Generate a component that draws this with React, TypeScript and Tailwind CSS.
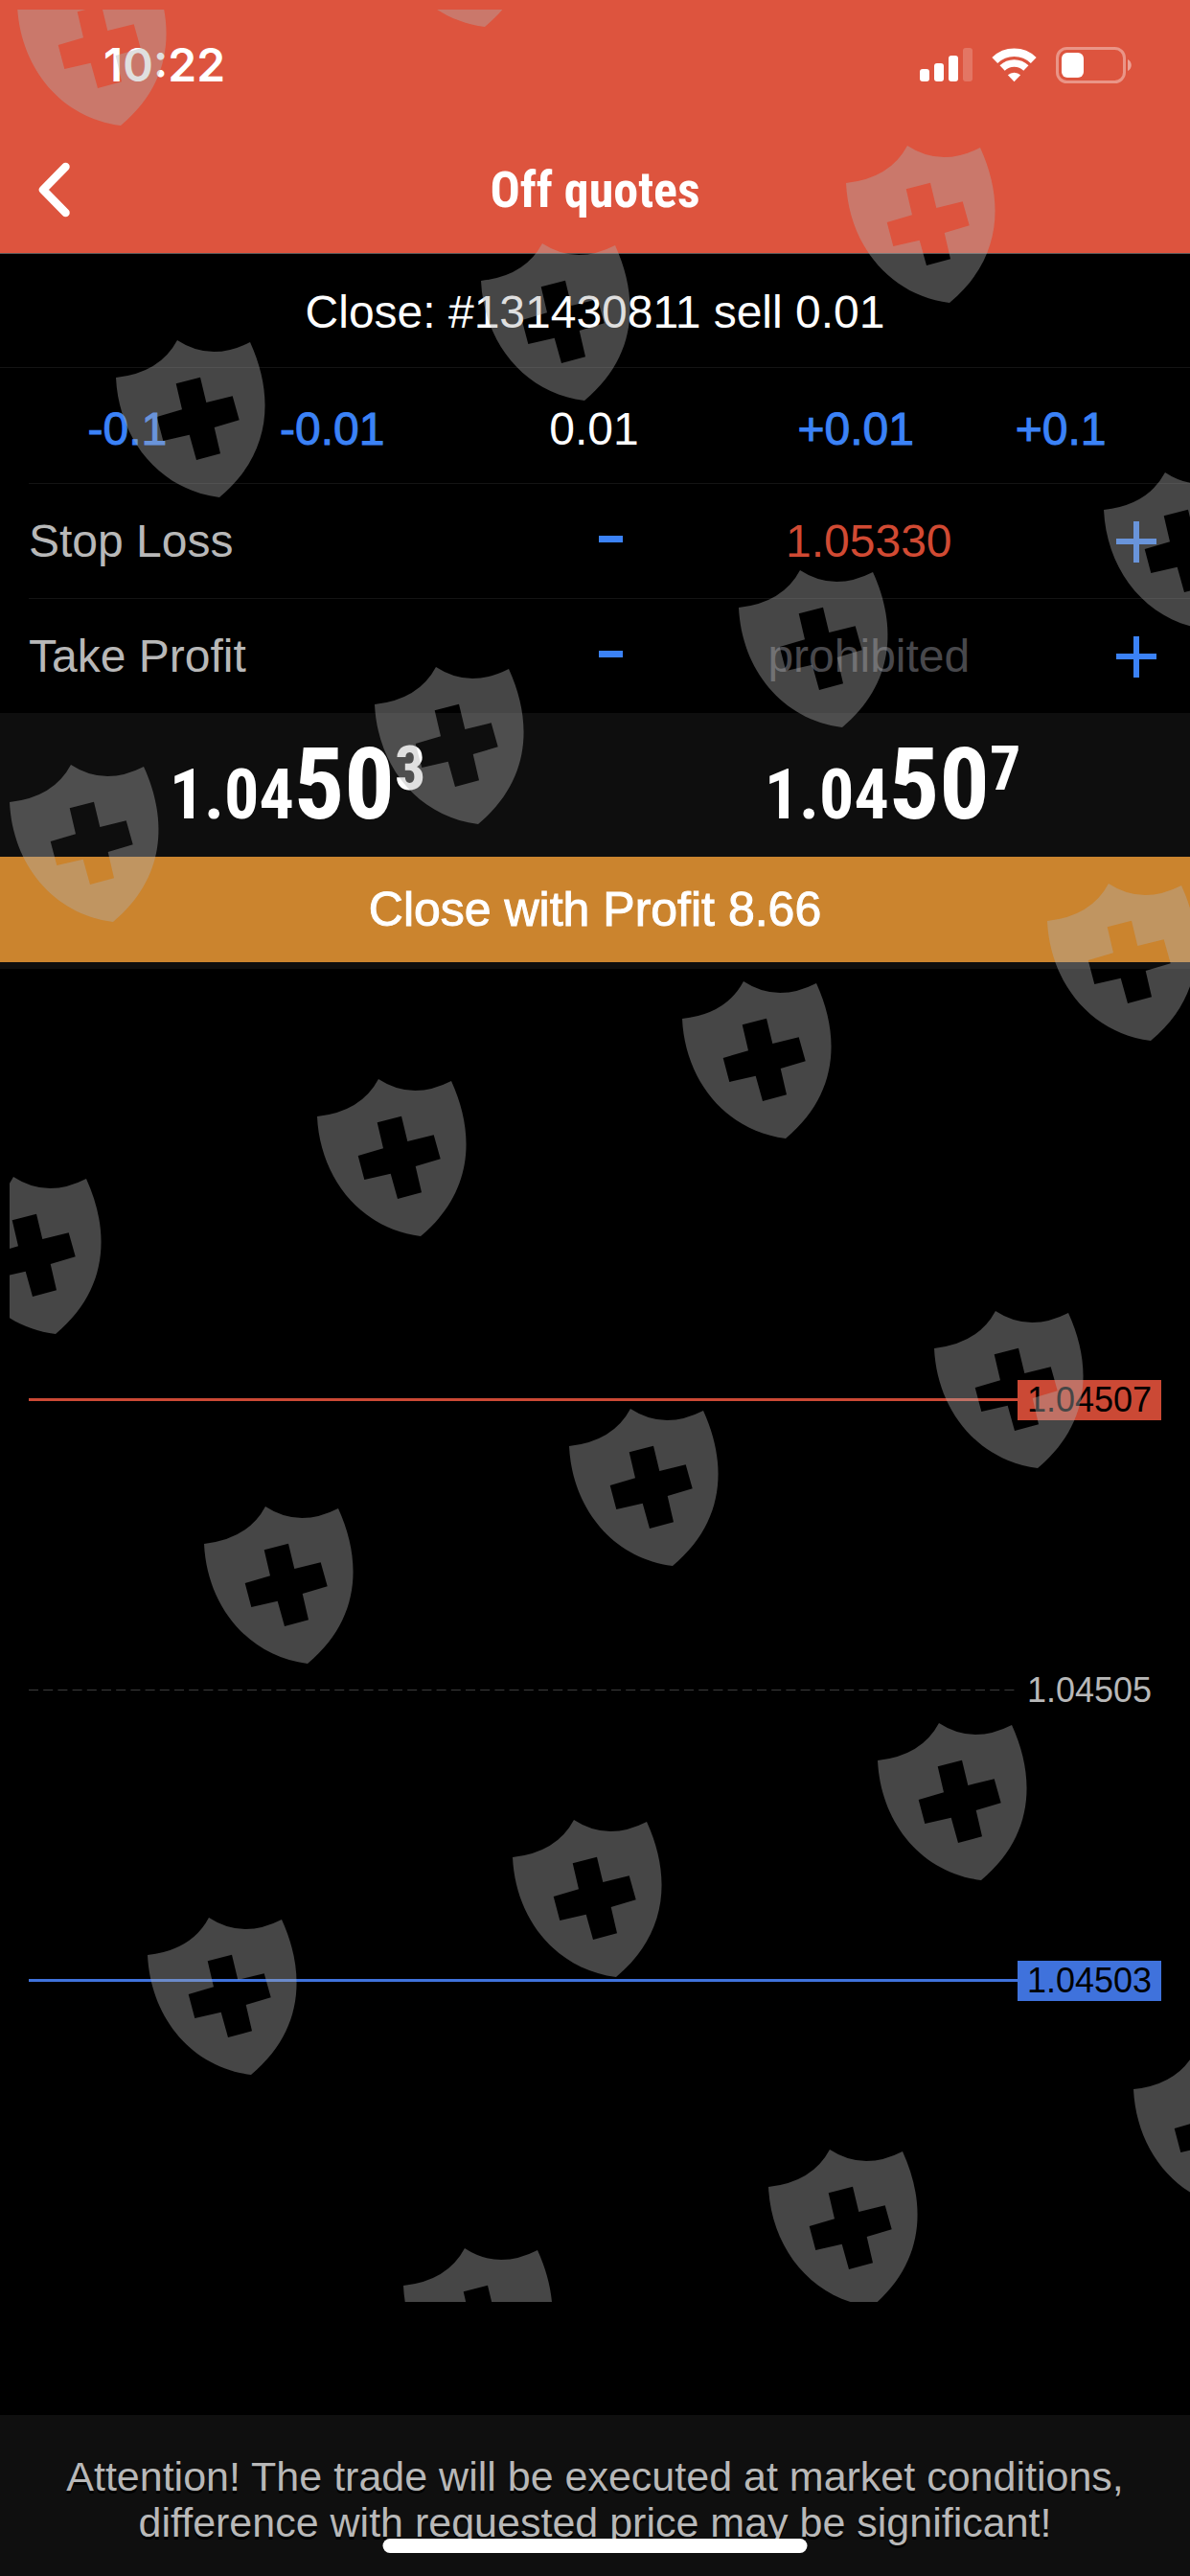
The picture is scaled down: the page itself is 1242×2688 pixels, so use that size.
import { useState } from "react";

const volumeSteps = ["-0.1", "-0.01", "0.01", "+0.01", "+0.1"];

const levels = [
  { name: "Stop Loss", id: "stop-loss", value: "1.05330" },
  { name: "Take Profit", id: "take-profit", value: "" },
];

const prices = [
  { side: "bid", base: "1.04", big: "50", pip: "3" },
  { side: "ask", base: "1.04", big: "50", pip: "7" },
];

// top left corner of every shield, in the overlay's own coordinates
const shields = [
  [8, -44],
  [388, -147],
  [873, 141],
  [492, 243],
  [111, 344],
  [1142, 482],
  [761, 584],
  [381, 685],
  [0, 787],
  [1083, 911],
  [702, 1013],
  [321, 1115],
  [-60, 1217],
  [965, 1357],
  [584, 1459],
  [203, 1561],
  [906, 1787],
  [525, 1888],
  [144, 1990],
  [1173, 2130],
  [792, 2232],
  [411, 2335],
];

const ShieldOverlay = () => (
  <div className="pointer-events-none absolute top-2.5 right-0 bottom-[286px] left-2.5 overflow-hidden">
    <svg className="h-full w-full" aria-hidden="true">
      <defs>
        <path
          id="shield"
          fillRule="evenodd"
          d="M0 40Q46 35 64 1Q99 24 140 3C166 60 162 120 108 165C45 157 3 104 0 40ZM62.7 46.3L88 39.7L94.3 66L121.7 59.3L128.7 84.3L102.7 92L109 119.3L84 126L76.7 99.7L49.3 106L42.7 81L69 73.3Z"
        />
      </defs>
      {shields.map(([x, y]) => (
        <use key={`${x}-${y}`} href="#shield" x={x} y={y} fill="#afafaf" fillOpacity="0.4" />
      ))}
    </svg>
  </div>
);

const StatusIcons = () => (
  <div className="flex items-center gap-5">
    <svg width="55" height="36" viewBox="0 0 55 36" fill="#fff" aria-hidden="true">
      <rect x="0" y="22" width="10" height="13" rx="3" />
      <rect x="15" y="16" width="10" height="19" rx="3" />
      <rect x="30" y="8" width="10" height="27" rx="3" />
      <rect x="45" y="0" width="10" height="35" rx="3" fillOpacity="0.2" />
    </svg>
    <svg width="47" height="36" viewBox="0 0 47.4 36" fill="none" aria-hidden="true">
      <path d="M3.3 12.9A29.3 29.3 0 0 1 44.1 12.9" stroke="#fff" strokeWidth="8.4" />
      <path d="M11.2 21.1A18 18 0 0 1 36.2 21.1" stroke="#fff" strokeWidth="7.6" />
      <path d="M23.7 35.4L17 28.4A10 10 0 0 1 30.4 28.4Z" fill="#fff" />
    </svg>
    <svg width="80" height="38" viewBox="0 0 80 38" aria-hidden="true">
      <rect x="1.5" y="1.5" width="70" height="35" rx="10" fill="none" stroke="#fff" strokeOpacity="0.38" strokeWidth="3" />
      <rect x="6" y="6" width="23" height="26" rx="6" fill="#fff" />
      <path d="M75 13C80 15 80 23 75 25Z" fill="#fff" fillOpacity="0.45" />
    </svg>
  </div>
);

const Header = () => (
  <header className="bg-[#dd543e] text-white">
    <div className="flex h-33 items-center justify-between pt-1 pr-15 pl-27">
      <span className="font-['Inter',sans-serif] text-5xl leading-none font-semibold">10:22</span>
      <StatusIcons />
    </div>
    <div className="grid h-33 grid-cols-[1fr_auto_1fr] items-center">
      <button type="button" aria-label="Back" className="flex w-24 justify-start pl-10">
        <svg width="34" height="58" viewBox="0 0 34 58" fill="none" stroke="#fff" strokeWidth="8.5" strokeLinecap="round" strokeLinejoin="round">
          <path d="M28.5 5L5 29L28.5 53" />
        </svg>
      </button>
      <h1 className="pt-0.5 font-['Liberation_Sans_Narrow','Roboto_Condensed',sans-serif] text-[52px] font-bold">
        Off quotes
      </h1>
    </div>
  </header>
);

const VolumeRow = () => (
  <div className="grid h-30 grid-cols-[18%_18%_1fr_18%_18%] items-center pt-2 pr-7 pl-6.5">
    {volumeSteps.map((step) =>
      step === "0.01" ? (
        <output key={step} className="text-center">
          {step}
        </output>
      ) : (
        <button key={step} type="button" className="text-[#3b82f7] [-webkit-text-stroke:1px]">
          {step}
        </button>
      )
    )}
  </div>
);

const LevelRow = ({ name, id, value }: { name: string; id: string; value: string }) => {
  const [price, setPrice] = useState(value);

  return (
    <div className="ml-7.5 grid h-30 grid-cols-[47%_76px_1fr_112px] items-center border-t border-[#141414]">
      <label htmlFor={id} className="text-[#b8b8b8]">
        {name}
      </label>
      <button type="button" aria-label={`Decrease ${name}`} className="flex justify-center">
        <svg width="26" height="44" viewBox="0 0 26 44" fill="#3b82f7">
          <rect x="0" y="16" width="25" height="7" />
        </svg>
      </button>
      <input
        id={id}
        value={price}
        placeholder="prohibited"
        onChange={(e) => setPrice(e.target.value)}
        className="ml-1 w-full min-w-0 bg-transparent text-center text-[#d14a33] outline-none placeholder:text-[#48484c]"
      />
      <button type="button" aria-label={`Increase ${name}`} className="flex justify-center">
        <svg width="42" height="44" viewBox="0 0 42 44" fill="#3b82f7">
          <rect x="0" y="19" width="42" height="6" />
          <rect x="18" y="1" width="6" height="43" />
        </svg>
      </button>
    </div>
  );
};

const QuotesPanel = () => (
  <section className="bg-[#0e0e0e] pb-[7px]">
    <div className="grid h-[150px] grid-cols-2 items-center text-center font-['Liberation_Sans_Narrow','Roboto_Condensed',sans-serif] font-bold">
      {prices.map((price) => (
        <p key={price.side} className="leading-none">
          <span className="text-7xl leading-none">{price.base}</span>
          <span className="text-[104px] leading-none">{price.big}</span>
          <span className="align-[30px] text-[64px] leading-none">{price.pip}</span>
        </p>
      ))}
    </div>
    <button type="button" className="block h-[110px] w-full bg-[#cb842e] text-[50px] [-webkit-text-stroke:1px]">
      Close with Profit 8.66
    </button>
  </section>
);

const Chart = () => (
  <section className="flex flex-1 flex-col justify-center gap-[261px] px-7.5 pb-1 text-4xl">
    <div className="flex items-center">
      <div className="h-[3px] flex-1 bg-[#cb4935]" />
      <span className="w-[150px] bg-[#cb4935] text-center leading-[42px] text-black">1.04507</span>
    </div>
    <div className="flex items-center">
      <svg className="h-px flex-1" aria-hidden="true">
        <line x1="0" y1="0.5" x2="100%" y2="0.5" stroke="#3c3c3c" strokeDasharray="10 5.2" />
      </svg>
      <span className="w-[150px] text-center leading-[42px] text-[#b8b8b8]">1.04505</span>
    </div>
    <div className="flex items-center">
      <div className="h-[3px] flex-1 bg-[#3f72dc]" />
      <span className="w-[150px] bg-[#3f72dc] text-center leading-[42px] text-black">1.04503</span>
    </div>
  </section>
);

const App = () => {
  return (
    <div className="relative flex min-h-screen flex-col bg-black font-['Liberation_Sans',Arial,sans-serif] text-5xl leading-none text-white">
      <Header />

      {/* Order form */}
      <section>
        <h2 className="flex h-30 items-center justify-center border-y border-t-[#5a5a5a] border-b-[#141414] pt-1">
          Close: #131430811 sell 0.01
        </h2>
        <VolumeRow />
        {levels.map((level) => (
          <LevelRow key={level.id} {...level} />
        ))}
      </section>

      <QuotesPanel />
      <Chart />

      <footer className="bg-[#0f0f0f] px-8 pt-10 pb-8 text-center text-[43px] leading-12 text-[#b8b8b8] [text-shadow:0_3px_0_#000]">
        <p>Attention! The trade will be executed at market conditions,</p>
        <p>difference with requested price may be significant!</p>
      </footer>

      <ShieldOverlay />

      {/* Home indicator */}
      <div className="absolute bottom-6 left-1/2 h-[15px] w-[443px] -translate-x-1/2 rounded-full bg-white" />
    </div>
  );
};

export default App;
